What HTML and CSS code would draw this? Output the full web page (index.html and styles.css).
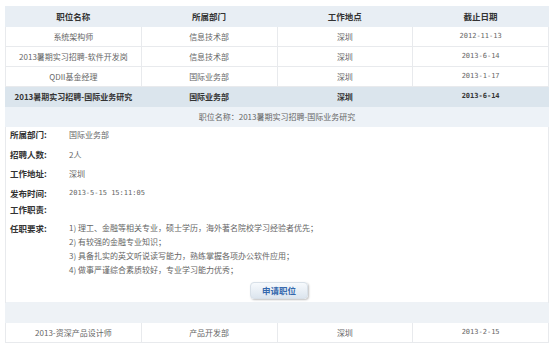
FILE: index.html
```html
<!DOCTYPE html>
<html lang="zh-CN">
<head>
    <meta charset="UTF-8">
    <title>招聘职位</title>
    <link rel="stylesheet" href="styles.css">
</head>
<body>

    <table class="jobs">
        <thead>
            <tr>
                <th>职位名称</th>
                <th>所属部门</th>
                <th>工作地点</th>
                <th>截止日期</th>
            </tr>
        </thead>
        <tbody>
            <tr>
                <td>系统架构师</td>
                <td>信息技术部</td>
                <td>深圳</td>
                <td class="date">2012-11-13</td>
            </tr>
            <tr>
                <td>2013暑期实习招聘-软件开发岗</td>
                <td>信息技术部</td>
                <td>深圳</td>
                <td class="date">2013-6-14</td>
            </tr>
            <tr>
                <td>QDII基金经理</td>
                <td>国际业务部</td>
                <td>深圳</td>
                <td class="date">2013-1-17</td>
            </tr>
            <tr class="active">
                <td>2013暑期实习招聘-国际业务研究</td>
                <td>国际业务部</td>
                <td>深圳</td>
                <td class="date">2013-6-14</td>
            </tr>
            <tr class="detail-title">
                <td colspan="4">职位名称：2013暑期实习招聘-国际业务研究</td>
            </tr>
            <tr class="detail">
                <td colspan="4">
                    <div class="field"><span class="label">所属部门:</span><span class="value">国际业务部</span></div>
                    <div class="field"><span class="label">招聘人数:</span><span class="value">2人</span></div>
                    <div class="field"><span class="label">工作地址:</span><span class="value">深圳</span></div>
                    <div class="field time"><span class="label">发布时间:</span><span class="value date">2013-5-15 15:11:05</span></div>
                    <div class="field"><span class="label">工作职责:</span><span class="value"></span></div>
                    <div class="field req">
                        <span class="label">任职要求:</span>
                        <ol class="value">
                            <li>1) 理工、金融等相关专业，硕士学历，海外著名院校学习经验者优先；</li>
                            <li>2) 有较强的金融专业知识；</li>
                            <li>3) 具备扎实的英文听说读写能力，熟练掌握各项办公软件应用；</li>
                            <li>4) 做事严谨综合素质较好，专业学习能力优秀；</li>
                        </ol>
                    </div>
                    <div class="apply-wrap">
                        <button type="button" class="apply-btn">申请职位</button>
                    </div>
                </td>
            </tr>
            <tr class="spacer">
                <td colspan="4"></td>
            </tr>
            <tr>
                <td>2013-资深产品设计师</td>
                <td>产品开发部</td>
                <td>深圳</td>
                <td class="date">2013-2-15</td>
            </tr>
        </tbody>
    </table>

</body>
</html>
```

FILE: styles.css
```css
body {
    margin: 6px 5px 0 5px;
    background: #fff;
    font-family: "Noto Sans CJK SC", "DejaVu Sans", sans-serif;
    font-size: 8px;
    color: #666;
}

.jobs {
    width: 544px;
    border-collapse: collapse;
    table-layout: fixed;
}

.jobs th,
.jobs td {
    border: 1px solid #e8eaed;
    text-align: center;
    padding: 0;
    height: 19px;
    line-height: 19px;
    white-space: nowrap;
}

.jobs th {
    background: #e8eef4;
    color: #333;
    font-weight: bold;
    font-size: 8.5px;
    border-color: #e8eef4;
}

.date {
    font-family: "DejaVu Sans Mono", "Liberation Mono", monospace;
    font-size: 7px;
}

.jobs tr.active td {
    background: #dbe5ed;
    color: #333;
    font-weight: bold;
    border-color: #dbe5ed;
}

.jobs tr.detail-title td {
    background: #edf2f7;
    border-color: #edf2f7;
    color: #666;
}

.jobs tr.detail td {
    text-align: left;
    padding: 0 0 2px 4px;
    line-height: normal;
    border-top: none;
    border-bottom: none;
    vertical-align: top;
    white-space: normal;
}

.field {
    display: flex;
    height: 19.5px;
    line-height: 19.5px;
}

.field:first-child {
    margin-top: -2px;
}

.field.time {
    height: 16px;
}

.label {
    width: 59px;
    flex-shrink: 0;
    font-weight: bold;
    font-size: 8.5px;
    color: #333;
}

.value {
    color: #666;
}

.field.req {
    height: auto;
    line-height: 18px;
}

.field.req ol {
    list-style: none;
    margin: 2px 0 0 0;
    padding: 0;
}

.field.req li {
    line-height: 14px;
    height: 14px;
}

.apply-wrap {
    display: flex;
    justify-content: center;
    margin: 5px 0 1px 0;
}

.apply-btn {
    width: 58px;
    height: 17px;
    padding: 0;
    border: 1px solid #d8e0e8;
    border-radius: 4px;
    background: linear-gradient(#f7fafd, #dce5ee);
    box-shadow: 1px 1px 2px rgba(0, 0, 0, 0.25);
    color: #3468ad;
    font-family: "Noto Sans CJK SC", sans-serif;
    font-size: 8.5px;
    font-weight: bold;
    line-height: 15px;
}

.jobs tr.spacer td {
    background: #eef2f6;
    border-color: #eef2f6;
}
```
